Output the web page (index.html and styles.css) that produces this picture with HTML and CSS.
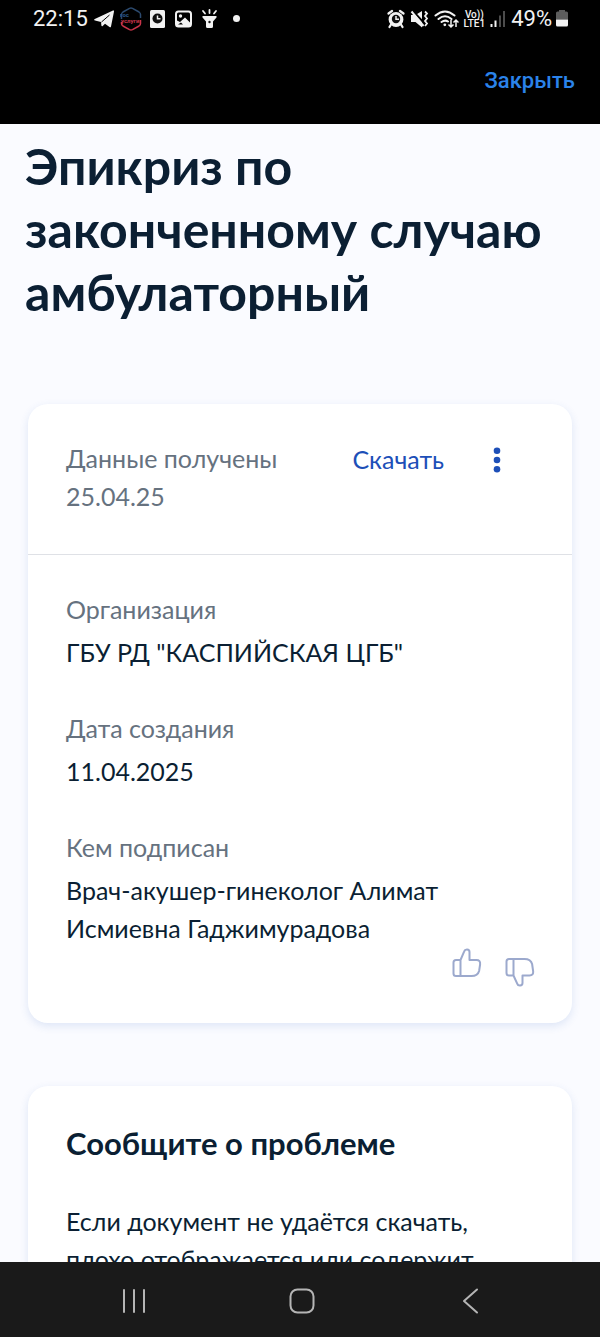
FILE: index.html
```html
<!DOCTYPE html>
<html lang="ru">
<head>
<meta charset="utf-8">
<meta name="viewport" content="width=device-width, initial-scale=1">
<title>Эпикриз по законченному случаю амбулаторный</title>
<link rel="stylesheet" href="styles.css">
</head>
<body>
<div class="screen">
  <header class="topbar">
    <div class="status">
      <div class="status-group">
        <span class="time">22:15</span>
        <svg width="20" height="20" viewBox="0 0 20 20" aria-hidden="true"><path fill="#f2f2f2" d="M0.800 10 19 1.600c.8-.3 1.200.1 1 .9l-3 15c-.2.9-.8 1.100-1.500.6l-4.500-3.300-2.300 2.200c-.6.6-1.200.4-1.300-.4L7 13 1 11.400c-1-.3-1.100-1-.2-1.400z"/><path d="M7.500 13 15.500 6" stroke="#000" stroke-width="1"/></svg>
        <svg width="22" height="24" viewBox="0 0 22 24" aria-hidden="true">
          <path d="M1.500 12V7.500Q1.500 6 3 5L9.500 1.300Q11 .5 12.500 1.300L19 5Q20.500 6 20.500 7.500V11" fill="none" stroke="#2c4a6e" stroke-width="1.500"/>
          <path d="M20.500 13v3.500q0 1.500-1.500 2.500l-6.500 3.700q-1.500.8-3 0L3 19q-1.500-1-1.500-2.500V15" fill="none" stroke="#c9354a" stroke-width="1.500"/>
          <text class="logo-blue" x="0" y="10">гос</text>
          <text class="logo-red" x="1" y="16">услуги</text>
        </svg>
        <svg width="18" height="20" viewBox="0 0 18 20" aria-hidden="true"><rect x="2" y="1" width="15" height="18" rx="1.500" fill="#f2f2f2"/><circle cx="9.500" cy="9.500" r="5" fill="#111"/><path d="M9.500 6.500v3.300h3" fill="none" stroke="#f2f2f2" stroke-width="1.500"/></svg>
        <svg width="22" height="20" viewBox="0 0 22 20" aria-hidden="true"><rect x="4" y="2.500" width="15" height="15" rx="2.500" fill="none" stroke="#f2f2f2" stroke-width="2"/><circle cx="8.500" cy="7" r="1.700" fill="#f2f2f2"/><path d="M5 11.500l3 1.500 5-4.500 5 5V17H5z" fill="#f2f2f2"/><path d="M6 15.500l3-2 2 2z" fill="#000"/></svg>
        <svg width="18" height="20" viewBox="0 0 18 20" aria-hidden="true"><path d="M2.500 7h14v1.500l-3.500 4v5q0 1.500-1.500 1.500h-4Q6 19 6 17.500v-5l-3.500-4z" fill="#f2f2f2"/><path d="M9.500 1v3M3 2l2 2.500M16 2l-2 2.500" stroke="#f2f2f2" stroke-width="1.800" stroke-linecap="round"/><circle cx="9.500" cy="13" r="1.200" fill="#111"/></svg>
        <svg width="24" height="20" viewBox="0 0 24 20" aria-hidden="true"><circle cx="12.500" cy="9.500" r="3.500" fill="#f2f2f2"/></svg>
      </div>
      <div class="status-group status-right">
        <svg width="18" height="20" viewBox="0 0 18 20" aria-hidden="true"><circle cx="9" cy="10.500" r="7.400" fill="#f2f2f2"/><path d="M1.500 4.500 5 2M16.500 4.500 13 2M4 15.500 2.500 18M14 15.500l1.500 2.500" stroke="#f2f2f2" stroke-width="2.200" stroke-linecap="round"/><circle cx="9" cy="10" r="4.200" fill="#111"/><path d="M9 7v3.300h3" fill="none" stroke="#f2f2f2" stroke-width="1.500"/></svg>
        <svg width="19" height="20" viewBox="0 0 19 20" aria-hidden="true"><path d="M1 6h4.500L12 2v16.500L5.500 13H1z" fill="#f2f2f2"/><path d="M2.500 1.500 14 14" stroke="#000" stroke-width="2"/><path d="M1.500 2.500 13.500 17" stroke="#f2f2f2" stroke-width="2"/><path d="M15 2.500l2 2-2 2.500 2 2.500-2 2.500 2 2.500-2 2.500" fill="none" stroke="#f2f2f2" stroke-width="1.800"/></svg>
        <svg width="25" height="20" viewBox="0 0 25 20" aria-hidden="true"><g fill="none" stroke="#f2f2f2" stroke-width="2" stroke-linecap="round"><path d="M1.500 6.500Q11 -1.500 20.500 6.500M4.500 10Q11 4.500 17.500 10M7.500 13Q11 10.500 14 12.500"/></g><circle cx="10.800" cy="15.800" r="1.400" fill="#f2f2f2"/><path d="M17 11v7M14.500 15.500 17 18l2.500-2.500M22 18v-7M19.500 13.500 22 11l2.500 2.500" fill="none" stroke="#f2f2f2" stroke-width="1.500"/></svg>
        <span class="volte"><span>Vo))</span><span>LTE1</span></span>
        <svg width="16" height="20" viewBox="0 0 16 20" aria-hidden="true"><path d="M1.500 15v3M5.500 11.500V18" stroke="#f2f2f2" stroke-width="2"/><path d="M10 6.500V18M14 2v16" stroke="#4c4c4c" stroke-width="2"/></svg>
        <span class="battery">
          <span class="percent">49%</span>
          <svg width="14" height="20" viewBox="0 0 14 20" aria-hidden="true"><path d="M4 1h6v1.500h1.500q1.500 0 1.500 1.500v6.500H1V4q0-1.500 1.500-1.500H4z" fill="#5c5c5c"/><path d="M1 10.500h12V16q0 1.500-1.500 1.500h-9Q1 17.500 1 16z" fill="#f2f2f2"/></svg>
        </span>
      </div>
    </div>
    <div class="actions"><button class="close" type="button">Закрыть</button></div>
  </header>

  <main class="content">
    <h1 class="title">Эпикриз по законченному случаю амбулаторный</h1>

    <section class="card document">
      <div class="card-head">
        <p class="received">Данные получены 25.04.25</p>
        <button class="download" type="button">Скачать</button>
        <button class="more" type="button" aria-label="Ещё">
          <svg width="8" height="26" viewBox="0 0 8 26" aria-hidden="true"><g fill="#1d4fb8"><circle cx="4" cy="3.700" r="3.300"/><circle cx="4" cy="13" r="3.300"/><circle cx="4" cy="22.300" r="3.300"/></g></svg>
        </button>
      </div>
      <dl class="fields">
        <div class="field"><dt>Организация</dt><dd>ГБУ РД "КАСПИЙСКАЯ ЦГБ"</dd></div>
        <div class="field"><dt>Дата создания</dt><dd>11.04.2025</dd></div>
        <div class="field"><dt>Кем подписан</dt><dd>Врач-акушер-гинеколог Алимат Исмиевна Гаджимурадова</dd></div>
      </dl>
      <div class="feedback">
        <button class="vote" type="button" aria-label="Нравится">
          <svg width="30" height="30" viewBox="0 0 30 30" aria-hidden="true"><path class="thumb" d="M8.500 12H4q-2.500 0-2.500 2.500v11Q1.500 28 4 28h15.500c5 0 6.800-2 7.600-5l1-6.500c.4-3-.9-4.500-3.600-4.500H17.500V4c0-3.300-4.500-3.300-5.300-.6L8.500 12v16"/></svg>
        </button>
        <button class="vote vote-down" type="button" aria-label="Не нравится">
          <svg width="30" height="30" viewBox="0 0 30 30" aria-hidden="true"><path class="thumb" d="M8.500 18.500H4Q1.500 18.500 1.500 16V4.500Q1.500 2 4 2h15.500c5 0 6.800 2 7.600 5l1 7c.4 3-.9 4.500-3.600 4.500h-7V26c0 3.300-4.500 3.300-5.300.6L8.500 18.500V2"/></svg>
        </button>
      </div>
    </section>

    <section class="card problem">
      <h2 class="problem-title">Сообщите о проблеме</h2>
      <p class="problem-text">Если документ не удаётся скачать, плохо отображается или содержит</p>
    </section>
  </main>

  <nav class="navbar" aria-label="Системная навигация">
    <button class="nav-button" type="button" aria-label="Недавние"><svg width="28" height="28" viewBox="0 0 28 28" aria-hidden="true"><path d="M4 3v22M14 3v22M24 3v22"/></svg></button>
    <button class="nav-button" type="button" aria-label="Домой"><svg width="28" height="28" viewBox="0 0 28 28" aria-hidden="true"><rect x="2.500" y="2.500" width="23" height="23" rx="7"/></svg></button>
    <button class="nav-button" type="button" aria-label="Назад"><svg width="28" height="28" viewBox="0 0 28 28" aria-hidden="true"><path d="M21 2.500 8 14l13 11.500"/></svg></button>
  </nav>
</div>
</body>
</html>
```
FILE: styles.css
```css
* {
  box-sizing: border-box;
  margin: 0;
}

body {
  background: #fafbff;
  color: #0b1f33;
  font-family: Lato, "Open Sans", sans-serif;
  font-size: 25px;
  line-height: 38px;
}

button {
  padding: 0;
  border: 0;
  background: none;
  font: inherit;
  cursor: pointer;
}

svg {
  display: block;
  flex: none;
}

.screen {
  display: flex;
  flex-direction: column;
  height: 100vh;
}

.topbar {
  flex: none;
  padding-bottom: 24px;
  background: #000;
  color: #f2f2f2;
  font-family: Roboto, sans-serif;
}

.status {
  display: flex;
  justify-content: space-between;
  padding: 0 31px 0 33px;
}

.status-group {
  display: flex;
  align-items: center;
  gap: 6px;
  height: 37px;
}

.status-right {
  gap: 5px;
}

.battery {
  display: flex;
  align-items: center;
  gap: 3px;
}

.time,
.percent {
  font-size: 22px;
}

.logo-blue,
.logo-red {
  font-family: Roboto, sans-serif;
  font-size: 6px;
  font-weight: 700;
}

.logo-blue {
  fill: #2c5a90;
}

.logo-red {
  fill: #c9354a;
}

.volte {
  display: flex;
  flex-direction: column;
  align-items: center;
  font-size: 10px;
  font-weight: 500;
  line-height: 9px;
}

.actions {
  display: flex;
  justify-content: flex-end;
  padding: 25px 25px 0;
}

.close {
  color: #2b83ea;
  font-size: 22px;
  font-weight: 500;
}

.content {
  flex: 1;
  min-height: 0;
  overflow: hidden;
  padding: 11px 28px 0;
}

.title {
  margin: 0 -3px 80px;
  font-size: 50px;
  font-weight: 700;
  line-height: 63px;
}

.card {
  border-radius: 20px;
  background: #fff;
  box-shadow: 0 3px 9px rgba(50, 100, 190, 0.14);
}

.document {
  margin-bottom: 63px;
}

.card-head {
  display: flex;
  align-items: flex-start;
  padding: 35px 71px 39px 38px;
  border-bottom: 1px solid #dfe1e6;
}

.received {
  flex: 1;
  padding-right: 60px;
  color: #66727f;
}

.download {
  height: 40px;
  color: #1d4fb8;
}

.more {
  display: flex;
  align-items: center;
  height: 42px;
  margin-left: 49px;
}

.fields {
  display: grid;
  gap: 38px;
  padding: 35px 38px 0;
}

.field {
  display: grid;
  gap: 5px;
}

dt {
  color: #66727f;
}

.feedback {
  display: flex;
  align-items: flex-start;
  justify-content: flex-end;
  gap: 23px;
  padding: 1px 37px 36px;
}

.vote-down {
  padding-top: 9px;
}

.thumb {
  fill: none;
  stroke: #9ca9cd;
  stroke-width: 2;
  stroke-linejoin: round;
}

.problem {
  padding: 35px 38px 38px;
}

.problem-title {
  margin-bottom: 37px;
  font-size: 31px;
  font-weight: 700;
  line-height: 44px;
}

.navbar {
  display: grid;
  flex: none;
  grid-template-columns: repeat(3, 1fr);
  height: 75px;
  padding: 3px 46px 0 50px;
  background: #1a1a1a;
}

.nav-button {
  display: grid;
  place-items: center;
}

.nav-button svg {
  fill: none;
  stroke: #b5b5b5;
  stroke-width: 2;
  stroke-linecap: round;
  stroke-linejoin: round;
}
```
